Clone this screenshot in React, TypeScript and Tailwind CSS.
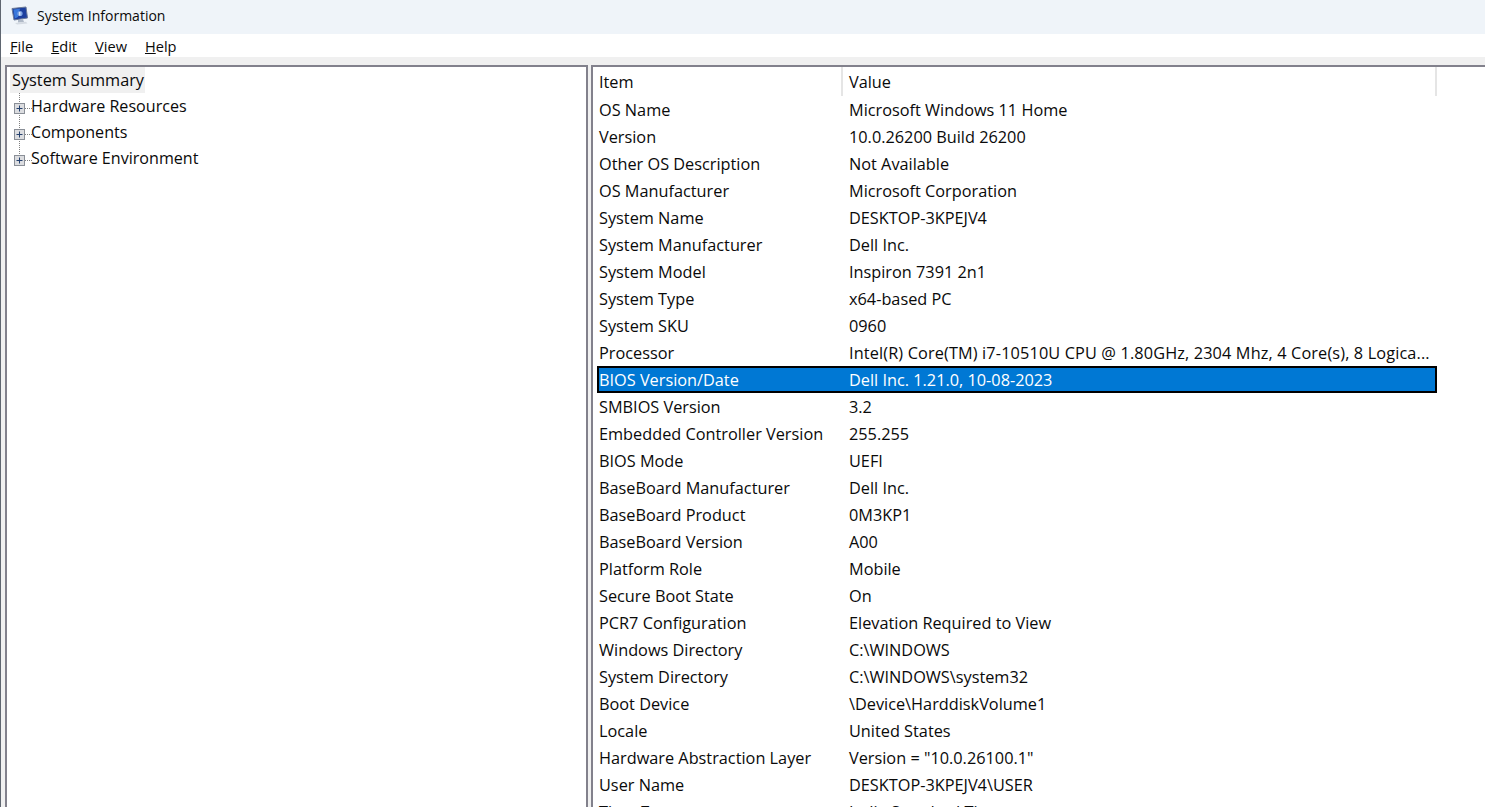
const rows: [string, string][] = [
  ['OS Name', 'Microsoft Windows 11 Home'],
  ['Version', '10.0.26200 Build 26200'],
  ['Other OS Description', 'Not Available'],
  ['OS Manufacturer', 'Microsoft Corporation'],
  ['System Name', 'DESKTOP-3KPEJV4'],
  ['System Manufacturer', 'Dell Inc.'],
  ['System Model', 'Inspiron 7391 2n1'],
  ['System Type', 'x64-based PC'],
  ['System SKU', '0960'],
  ['Processor', 'Intel(R) Core(TM) i7-10510U CPU @ 1.80GHz, 2304 Mhz, 4 Core(s), 8 Logica...'],
  ['BIOS Version/Date', 'Dell Inc. 1.21.0, 10-08-2023'],
  ['SMBIOS Version', '3.2'],
  ['Embedded Controller Version', '255.255'],
  ['BIOS Mode', 'UEFI'],
  ['BaseBoard Manufacturer', 'Dell Inc.'],
  ['BaseBoard Product', '0M3KP1'],
  ['BaseBoard Version', 'A00'],
  ['Platform Role', 'Mobile'],
  ['Secure Boot State', 'On'],
  ['PCR7 Configuration', 'Elevation Required to View'],
  ['Windows Directory', 'C:\\WINDOWS'],
  ['System Directory', 'C:\\WINDOWS\\system32'],
  ['Boot Device', '\\Device\\HarddiskVolume1'],
  ['Locale', 'United States'],
  ['Hardware Abstraction Layer', 'Version = "10.0.26100.1"'],
  ['User Name', 'DESKTOP-3KPEJV4\\USER'],
  ['Time Zone', 'India Standard Time'],
];

const SELECTED = 'BIOS Version/Date';

function AppIcon() {
  return (
    <svg width="18" height="20" viewBox="0 0 18 20" className="shrink-0">
      <path d="M1 2.5 L15 1 L16.5 12 L3 14 Z" fill="#1c3f9e" stroke="#6b7a99" strokeWidth="1" />
      <path d="M2.5 3.5 L9 2.8 L7 11 L3.8 12.5 Z" fill="#3a78dc" />
      <circle cx="9" cy="7.5" r="2.6" fill="#7fa6e6" />
      <path d="M8.8 6 V9.5" stroke="#ffffff" strokeWidth="1" />
      <path d="M7 14 L12 13.3 L13 16 L7 16.6 Z" fill="#aeb8c6" />
      <path d="M4 17 L15 15.8 L16.5 17.4 L6 18.6 Z" fill="#d4dae2" />
    </svg>
  );
}

function Expander({ last }: { last?: boolean }) {
  return (
    <svg width="23" height="26" viewBox="0 0 23 26" className="shrink-0">
      <path d={last ? 'M10.5 0 V10' : 'M10.5 0 V26'} stroke="#808080" strokeWidth="1" strokeDasharray="1 1" />
      <path d="M16 15.5 H23" stroke="#808080" strokeWidth="1" strokeDasharray="1 1" />
      <rect x="5.5" y="10.5" width="10" height="10" fill="#dcdde0" stroke="#8a8f97" />
      <path d="M7.5 15.5 H13.5 M10.5 12.5 V18.5" stroke="#24406e" strokeWidth="1" />
    </svg>
  );
}

function TreeNode({ label, last }: { label: string; last?: boolean }) {
  return (
    <div className="flex h-[26px] items-center">
      <Expander last={last} />
      <span className="ml-[-1px] text-[16.1px] text-[#0a0a0a]">{label}</span>
    </div>
  );
}

export default function App() {
  return (
    <div className="flex h-[807px] w-[1485px] flex-col overflow-hidden border-l border-[#5f6670] bg-[#f0f0f0] text-[16.3px] leading-[26px] font-['Open_Sans','Noto_Sans',sans-serif] text-[#0a0a0a]">
      {/* title bar */}
      <div className="flex h-[34px] shrink-0 items-center bg-[#eff4f9] pb-[3px] pl-[10px]">
        <AppIcon />
        <span className="ml-[8px] text-[14px]">System Information</span>
      </div>

      {/* menu */}
      <div className="flex h-[23px] shrink-0 items-center gap-[18px] bg-white pl-[9px] text-[14.6px]">
        <span><u>F</u>ile</span>
        <span><u>E</u>dit</span>
        <span><u>V</u>iew</span>
        <span><u>H</u>elp</span>
      </div>

      {/* panes */}
      <div className="mt-[8px] flex min-h-0 flex-1">
        <div className="ml-[4px] w-[583px] shrink-0 border-t-2 border-r-2 border-l-2 border-[#82818c] bg-white pl-[3px]">
          <div className="h-[26px] w-[135px] bg-[#f0f0f0] pl-[2px]">System Summary</div>
          <div className="ml-[-1px]">
            <TreeNode label="Hardware Resources" />
            <TreeNode label="Components" />
            <TreeNode label="Software Environment" last />
          </div>
        </div>

        <div className="ml-[3px] flex-1 overflow-hidden border-t-2 border-l-2 border-[#82818c] bg-white pl-[4px]">
          <div className="flex h-[29px] w-[840px] items-center">
            <div className="h-full w-[246px] shrink-0 border-r-2 border-[#e5e5e5] pt-[2px] pl-[2px]">Item</div>
            <div className="h-full flex-1 border-r-2 border-[#e5e5e5] pt-[2px] pl-[6px]">Value</div>
          </div>
          {rows.map(([item, value]) => {
            const selected = item === SELECTED;
            return (
              <div
                key={item}
                className={
                  selected
                    ? 'flex h-[27px] w-[840px] items-center border-2 border-black bg-[#0078d4] text-white'
                    : 'flex h-[27px] w-[840px] items-center border-2 border-transparent'
                }
              >
                <div className="w-[250px] shrink-0 whitespace-nowrap">{item}</div>
                <div className={item === 'Processor' ? 'tracking-[0.13px] whitespace-nowrap' : 'whitespace-nowrap'}>{value}</div>
              </div>
            );
          })}
        </div>
      </div>
    </div>
  );
}
